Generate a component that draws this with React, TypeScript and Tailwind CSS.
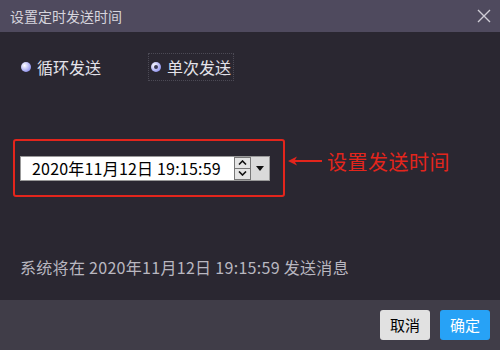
import React from 'react';

const FONT = { fontFamily: '"Microsoft YaHei", "Noto Sans CJK SC", "Liberation Sans", sans-serif' };

export default function App() {
  return (
    <div className="w-[500px] h-[350px] flex flex-col bg-[#2a2731] overflow-hidden" style={FONT}>
      {/* title bar */}
      <div className="h-[32px] flex items-center justify-between pl-[10px] pr-[8px] bg-[#4f4a5e]">
        <span className="text-[14px] text-[#d6d4dc]">设置定时发送时间</span>
        <svg width="14" height="14" viewBox="0 0 14 14" className="mr-[1px]">
          <path d="M1 1L13 13M13 1L1 13" stroke="#cfcdd6" strokeWidth="1.4" />
        </svg>
      </div>

      {/* body */}
      <div className="flex-1 flex flex-col px-[20px]">
        <div className="flex items-center h-[24px] mt-[23px] text-[16px] text-[#e4e3ea]">
          <label className="flex items-center gap-[6px] pl-[1px]">
            <span className="w-[10px] h-[10px] rounded-full bg-[radial-gradient(circle_at_35%_35%,#ffffff,#9a9cf0_70%)]" />
            <span>循环发送</span>
          </label>
          <label className="flex items-center gap-[6px] ml-[48px] outline outline-1 outline-dotted outline-[#4c4a55] px-[2px] py-[1px]">
            <span className="w-[10px] h-[10px] rounded-full bg-[radial-gradient(circle_at_35%_35%,#ffffff,#9a9cf0_70%)] flex items-center justify-center">
              <span className="w-[4px] h-[4px] rounded-full bg-[#3a3a55]" />
            </span>
            <span>单次发送</span>
          </label>
        </div>

        <div className="flex items-center mt-[60px] -ml-[7px]">
          <div className="w-[272px] h-[58px] border-2 border-[#e3251c] rounded-[3px] flex items-center pl-[5px]">
            <div className="flex items-center h-[25px] bg-white border border-[#999]">
              <span className="w-[213px] pl-[11px] text-[16px] tracking-[0.2px] text-black leading-none">2020年11月12日 19:15:59</span>
              <div className="w-[17px] h-[23px] flex flex-col border border-[#777] bg-[#e4e4e4]">
                <div className="flex-1 flex items-center justify-center border-b border-[#777]">
                  <svg width="9" height="5" viewBox="0 0 9 5"><path d="M1 4.5L4.5 1L8 4.5" stroke="#111" strokeWidth="1.6" fill="none" /></svg>
                </div>
                <div className="flex-1 flex items-center justify-center">
                  <svg width="9" height="5" viewBox="0 0 9 5"><path d="M1 0.5L4.5 4L8 0.5" stroke="#111" strokeWidth="1.6" fill="none" /></svg>
                </div>
              </div>
              <div className="w-[18px] h-[23px] flex items-center justify-center bg-[#dadada]">
                <svg width="8" height="5" viewBox="0 0 8 5"><path d="M0 0H8L4 5Z" fill="#111" /></svg>
              </div>
            </div>
          </div>
          <svg width="34" height="10" viewBox="0 0 34 10" className="ml-[3px] -mt-[14px]">
            <path d="M0 5L9 0.5L7 4H34V6H7L9 9.5Z" fill="#e3251c" />
          </svg>
          <span className="ml-[5px] -mt-[13px] text-[20px] text-[#e3251c] tracking-[0.5px]">设置发送时间</span>
        </div>

        <div className="mt-[58px] text-[16px] tracking-[0.3px] text-[#b9b7c0]">系统将在 2020年11月12日 19:15:59 发送消息</div>
      </div>

      {/* footer */}
      <div className="h-[50px] flex items-center justify-end gap-[10px] pr-[10px] bg-[#403d48]">
        <button className="w-[50px] h-[30px] rounded-[3px] bg-[#e1e1e1] text-[15px] text-black">取消</button>
        <button className="w-[50px] h-[30px] rounded-[3px] bg-[#27a2f6] text-[15px] text-white">确定</button>
      </div>
    </div>
  );
}
